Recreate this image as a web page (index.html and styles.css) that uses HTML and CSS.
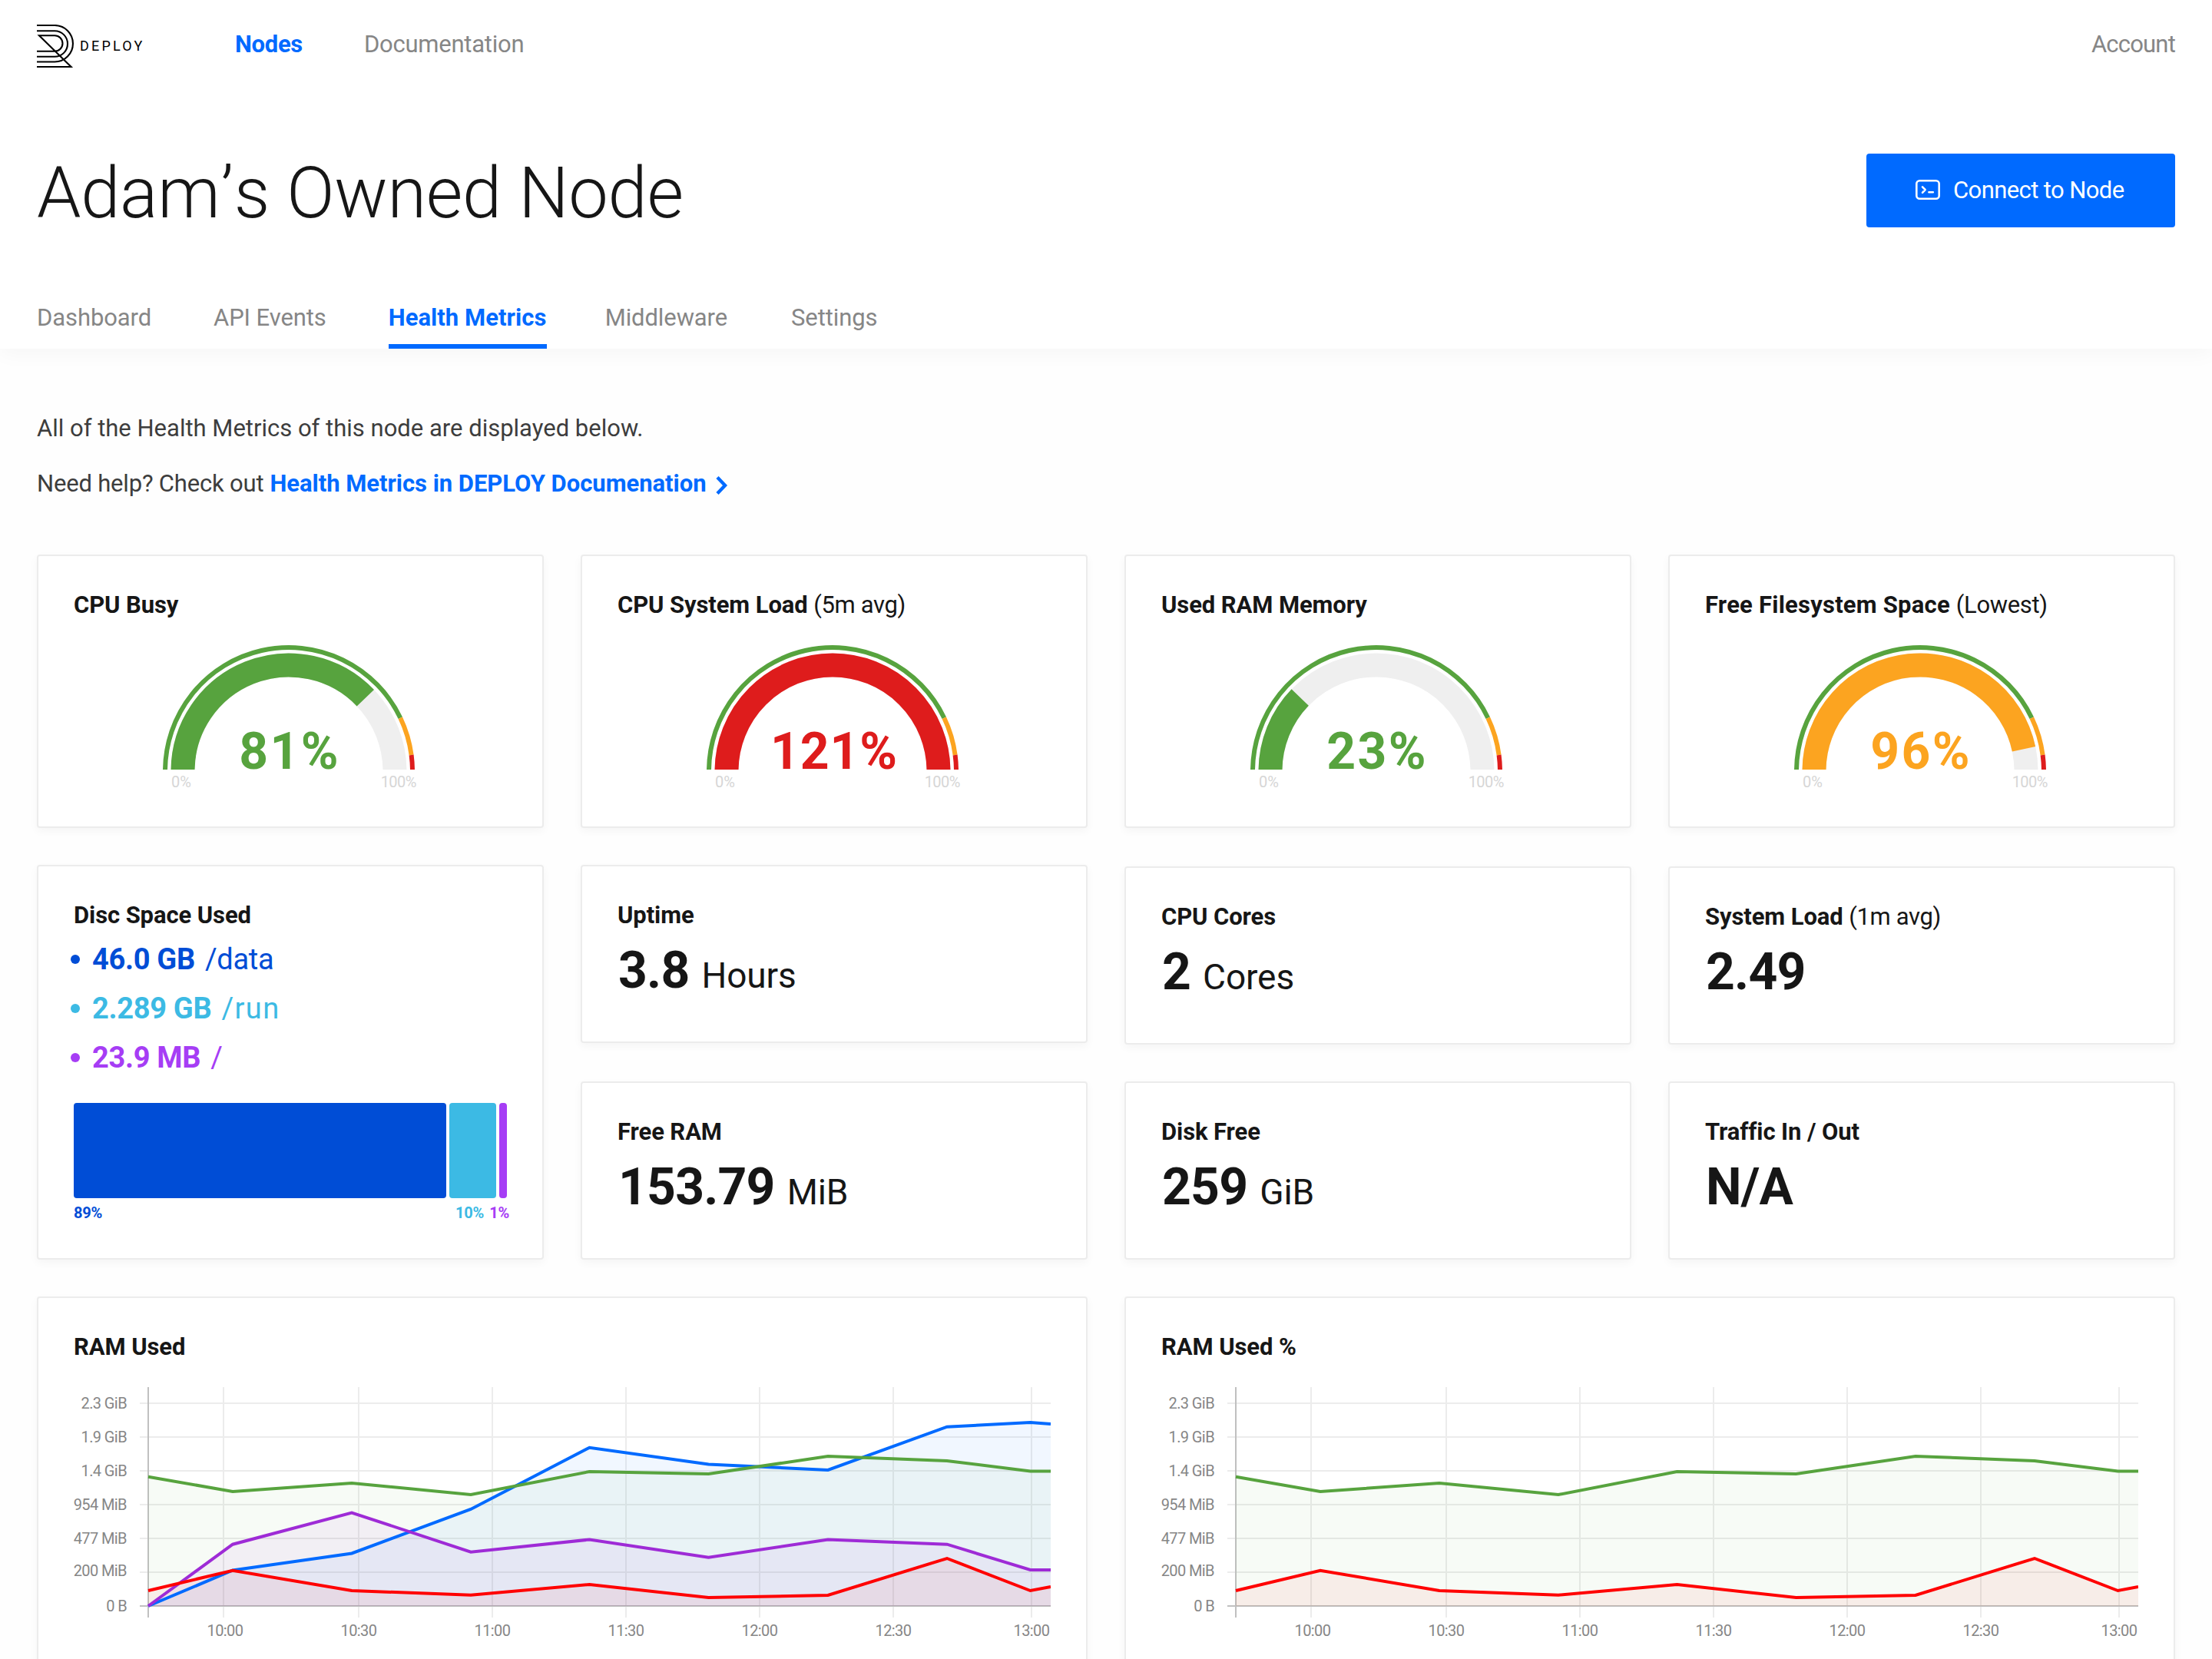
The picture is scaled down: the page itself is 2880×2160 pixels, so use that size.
FILE: index.html
```html
<!DOCTYPE html>
<html lang="en">
<head>
    <meta charset="UTF-8">
    <meta name="viewport" content="width=device-width, initial-scale=1.0">
    <title>Health Metrics</title>
    <link rel="stylesheet" href="styles.css">
</head>
<body>
    <header class="header">
        <nav class="topbar">
            <a class="logo">
                <svg width="48" height="56" viewBox="0 0 48 56" fill="none" stroke="#000" stroke-width="2.1">
                    <path d="M0 1H23.2A23.75 23.75 0 0 1 23.2 48.5H0"/>
                    <path d="M0 8.2H23.2A16.8 16.8 0 0 1 23.2 41.8H0"/>
                    <path d="M0 34.8H23.2A10.3 10.3 0 0 0 23.2 14.2H3L44.6 55H0"/>
                </svg>
                <span>DEPLOY</span>
            </a>
            <a class="nav-link active">Nodes</a>
            <a class="nav-link">Documentation</a>
            <a class="nav-link account">Account</a>
        </nav>

        <div class="hero">
            <h1>Adam<span>’</span>s Owned Node</h1>
            <button class="connect">
                <svg width="32" height="26" viewBox="0 0 32 26" fill="none" stroke="#fff" stroke-width="2.6" stroke-linecap="round" stroke-linejoin="round">
                    <rect x="1.3" y="1.3" width="29.4" height="23.4" rx="4"/>
                    <path d="M9 9.4L12.6 13L9 16.8M17.4 16.3H22.8"/>
                </svg>
                <span>Connect to Node</span>
            </button>
        </div>

        <div class="tabs">
            <a class="tab">Dashboard</a>
            <a class="tab">API Events</a>
            <a class="tab active">Health Metrics</a>
            <a class="tab">Middleware</a>
            <a class="tab">Settings</a>
        </div>
    </header>

    <main class="content">
        <div class="intro">
            <p>All of the Health Metrics of this node are displayed below.</p>
            <p class="help">Need help? Check out
                <a>Health Metrics in DEPLOY Documenation<svg width="18" height="28" viewBox="0 0 18 28" fill="none" stroke="#006aff" stroke-width="4.4"><path d="M3 3.4L13 14L3 24.6"/></svg></a>
            </p>
        </div>

        <!-- Gauges -->
        <section class="grid gauges">
            <div class="card">
                <h3>CPU Busy</h3>
                <div class="gauge green" data-angle="136.3"><strong>81%</strong></div>
            </div>
            <div class="card">
                <h3>CPU System Load <span>(5m avg)</span></h3>
                <div class="gauge red" data-angle="180"><strong>121%</strong></div>
            </div>
            <div class="card">
                <h3>Used RAM Memory</h3>
                <div class="gauge green" data-angle="44"><strong>23%</strong></div>
            </div>
            <div class="card">
                <h3 class="wide">Free Filesystem Space <span>(Lowest)</span></h3>
                <div class="gauge orange" data-angle="168"><strong>96%</strong></div>
            </div>
        </section>

        <!-- Disc space and single values -->
        <section class="grid stats">
            <div class="card disc">
                <h3>Disc Space Used</h3>
                <ul>
                    <li class="data"><b>46.0 GB</b><span>/data</span></li>
                    <li class="run"><b>2.289 GB</b><span>/run</span></li>
                    <li class="root"><b>23.9 MB</b><span>/</span></li>
                </ul>
                <div class="disc-bar">
                    <div class="data" style="width: 485px"></div>
                    <div class="run" style="width: 61px"></div>
                    <div class="root" style="width: 10px"></div>
                </div>
                <div class="disc-labels">
                    <b class="data">89%</b>
                    <b class="run">10%</b>
                    <b class="root">1%</b>
                </div>
            </div>
            <div class="column">
                <div class="card">
                    <h3>Uptime</h3>
                    <p class="value"><b>3.8</b><span>Hours</span></p>
                </div>
                <div class="card">
                    <h3>Free RAM</h3>
                    <p class="value"><b>153.79</b><span>MiB</span></p>
                </div>
            </div>
            <div class="column low">
                <div class="card">
                    <h3>CPU Cores</h3>
                    <p class="value"><b>2</b><span>Cores</span></p>
                </div>
                <div class="card">
                    <h3>Disk Free</h3>
                    <p class="value"><b>259</b><span>GiB</span></p>
                </div>
            </div>
            <div class="column low">
                <div class="card">
                    <h3>System Load <span>(1m avg)</span></h3>
                    <p class="value"><b>2.49</b></p>
                </div>
                <div class="card">
                    <h3>Traffic In / Out</h3>
                    <p class="value"><b>N/A</b></p>
                </div>
            </div>
        </section>

        <!-- Charts -->
        <section class="grid charts">
            <div class="card">
                <h3>RAM Used</h3>
                <svg class="chart" data-series="blue green purple red"></svg>
            </div>
            <div class="card">
                <h3>RAM Used %</h3>
                <svg class="chart" data-series="green red"></svg>
            </div>
        </section>
    </main>

    <script>
        // Point on a circle around the gauge centre, 0deg = left end
        function point(r, deg) {
            const a = deg * Math.PI / 180;
            return (164 - r * Math.cos(a)).toFixed(1) + ' ' + (164 - r * Math.sin(a)).toFixed(1);
        }

        function arc(r, from, to, cls) {
            return `<path class="${cls}" d="M${point(r, from)}A${r} ${r} 0 0 1 ${point(r, to)}"/>`;
        }

        document.querySelectorAll('.gauge').forEach((gauge) => {
            const svg = '<svg width="328" height="162" viewBox="0 0 328 162">' +
                arc(161, 0, 154.5, 'ring ring-green') +
                arc(161, 154.5, 172.5, 'ring ring-orange') +
                arc(161, 172.5, 180, 'ring ring-red') +
                arc(138, 0, 180, 'track') +
                arc(138, 0, Number(gauge.dataset.angle), 'fill') +
                '</svg><div class="scale"><span>0%</span><span class="max">100%</span></div>';
            gauge.insertAdjacentHTML('afterbegin', svg);
        });

        // Line charts
        const xs = [97, 207, 362, 517, 671.5, 826.5, 982, 1137, 1245.5, 1272];
        const series = {
            blue: [285, 238.5, 216.5, 159, 78.7, 100.5, 108, 51.7, 46, 48],
            green: [116.7, 136, 125, 140, 110, 113, 90, 96, 109.5, 109.5],
            purple: [285, 204.7, 163.5, 214.7, 198.5, 221.7, 198.5, 204.7, 238, 238],
            red: [265, 238.7, 265, 270.7, 257, 274, 271, 223, 265, 260]
        };
        const rows = [['2.3 GiB', 21, 28], ['1.9 GiB', 65, 72], ['1.4 GiB', 109, 116], ['954 MiB', 153, 160],
            ['477 MiB', 197, 204], ['200 MiB', 241, 246], ['0 B', 285, 292]];
        const times = [['10:00', 195], ['10:30', 371], ['11:00', 545], ['11:30', 719], ['12:00', 893], ['12:30', 1067], ['13:00', 1247]];

        document.querySelectorAll('.chart').forEach((chart) => {
            let out = '';
            times.forEach(([label, x], i) => {
                out += `<path class="line" d="M${x} 0V300"/><text class="time" x="${i ? x : x + 2}" y="324">${label}</text>`;
            });
            rows.forEach(([label, y, base]) => {
                out += `<path class="line${y === 285 ? ' axis' : ''}" d="M86 ${y}H1272"/><text class="size" x="69" y="${base}">${label}</text>`;
            });
            out += '<path class="line axis" d="M97 0V300"/>';

            const names = chart.dataset.series.split(' ');
            const lines = names.map((name) => xs.map((x, i) => x + ' ' + series[name][i]).join('L'));
            names.forEach((name, i) => {
                out += `<path class="area ${name}" d="M${lines[i]}V285H97Z"/>`;
            });
            names.forEach((name, i) => {
                out += `<path class="plot ${name}" d="M${lines[i]}"/>`;
            });
            chart.innerHTML = out;
        });
    </script>
</body>
</html>
```
FILE: styles.css
```css
/* General Reset */
* {
    box-sizing: border-box;
}

body {
    margin: 0;
    height: 2160px;
    overflow: hidden;
    font-family: Roboto, sans-serif;
    font-size: 31px;
    line-height: 36px;
    color: #161616;
    background: #fefefe;
}

h1,
h3,
p,
ul {
    margin: 0;
    padding: 0;
}

svg {
    display: block;
}

/* Header */
.header {
    height: 454px;
    padding: 0 48px;
    background: #fff;
    box-shadow: 0 8px 24px rgba(0, 0, 0, 0.03);
}

.topbar {
    display: flex;
    align-items: center;
    height: 116px;
}

.logo {
    display: flex;
    align-items: center;
    gap: 8px;
    width: 258px;
    margin-top: 4px;
    font-size: 18px;
    font-weight: 450;
    letter-spacing: 3.2px;
    color: #000;
}

.nav-link {
    margin-right: 80px;
    letter-spacing: -0.25px;
    color: #868686;
}

.nav-link.active {
    font-weight: 700;
    letter-spacing: -0.3px;
    color: #006aff;
}

.nav-link.account {
    margin: 0 0 0 auto;
    letter-spacing: -0.8px;
}

.hero {
    display: flex;
    align-items: center;
    justify-content: space-between;
    height: 264px;
}

.hero h1 {
    margin-top: 7px;
    font-size: 92px;
    font-weight: 300;
    line-height: 108px;
    letter-spacing: -0.25px;
}

.hero h1 span {
    margin: 0 1px;
}

.connect {
    display: flex;
    align-items: center;
    gap: 17px;
    width: 402px;
    height: 96px;
    padding: 0 0 0 64px;
    border: 0;
    border-radius: 4px;
    background: #006aff;
    color: #fff;
    font: inherit;
    letter-spacing: -0.6px;
}

.connect svg {
    margin-top: -2px;
}

.tabs {
    display: flex;
    gap: 81px;
}

.tab {
    padding: 16px 0;
    border-bottom: 6px solid transparent;
    letter-spacing: -0.1px;
    color: #868686;
}

.tab:last-child {
    margin-left: 2px;
}

.tab.active {
    width: 206px;
    margin-right: -5px;
    border-color: #006aff;
    font-weight: 700;
    letter-spacing: 0.05px;
    color: #006aff;
}

/* Content */
.content {
    padding: 68px 48px 0;
}

.intro {
    height: 200px;
    line-height: 72px;
    color: #3d3d3d;
}

.help {
    display: flex;
    gap: 8px;
    letter-spacing: -0.19px;
}

.help a {
    display: flex;
    align-items: center;
    gap: 11px;
    font-weight: 700;
    letter-spacing: -0.03px;
    color: #006aff;
}

.help svg {
    margin-top: 4px;
}

.grid {
    display: grid;
    grid-template-columns: repeat(4, minmax(0, 1fr));
    gap: 48px;
    margin-bottom: 48px;
}

/* Cards */
.card {
    padding: 46px 46px 0;
    border: 2px solid #ececec;
    border-radius: 4px;
    background: #fff;
    box-shadow: 0 4px 12px rgba(0, 0, 0, 0.04);
}

.card h3 {
    font-size: 31px;
    line-height: 36px;
    font-weight: 700;
    letter-spacing: -0.1px;
    white-space: nowrap;
}

.card h3 span {
    font-weight: 400;
    letter-spacing: -0.35px;
}

.card h3.wide {
    letter-spacing: 0.22px;
}

.gauges .card {
    height: 356px;
}

/* Gauge */
.gauge {
    position: relative;
    width: 328px;
    margin: 34px 0 0 116px;
}

.gauge path {
    fill: none;
}

.gauge .ring {
    stroke-width: 6px;
}

.ring-green {
    stroke: #57a33e;
}

.ring-orange {
    stroke: #fca420;
}

.ring-red {
    stroke: #de1c1c;
}

.gauge .track {
    stroke: #efefef;
    stroke-width: 31px;
}

.gauge .fill {
    stroke: currentColor;
    stroke-width: 31px;
}

.gauge.green {
    color: #57a33e;
}

.gauge.red {
    color: #de1c1c;
}

.gauge.orange {
    color: #fca420;
}

.gauge strong {
    position: absolute;
    top: 106px;
    left: 1px;
    width: 100%;
    font-size: 66px;
    line-height: 66px;
    letter-spacing: 2.4px;
    text-align: center;
}

.gauge.red strong {
    left: 2px;
    letter-spacing: 0.9px;
}

.scale {
    display: flex;
    justify-content: space-between;
    margin: 4px -2px 0 11px;
    font-size: 20px;
    line-height: 24px;
    color: #d6d6d6;
}

.scale .max {
    letter-spacing: -0.5px;
}

/* Stats */
.column {
    display: flex;
    flex-direction: column;
    justify-content: space-between;
    height: 514px;
}

.column.low {
    padding-top: 2px;
}

.column .card {
    height: 232px;
}

.value {
    display: flex;
    align-items: baseline;
    gap: 16px;
    margin-top: 15px;
    padding-left: 1px;
    line-height: 78px;
}

.value b {
    font-size: 66px;
    letter-spacing: -0.8px;
}

.value span {
    font-size: 46px;
    font-weight: 370;
    letter-spacing: -0.1px;
}

/* Disc space */
.disc {
    height: 514px;
}

.disc ul {
    margin: 7px 0 27px -4px;
    list-style: none;
}

.disc li {
    display: flex;
    align-items: center;
    gap: 13px;
    font-size: 38px;
    line-height: 64px;
    letter-spacing: -0.3px;
}

.disc li::before {
    content: "";
    width: 12px;
    height: 12px;
    margin-right: 3px;
    border-radius: 50%;
    background: currentColor;
}

.disc .run span {
    letter-spacing: 1.4px;
}

.data {
    color: #004dd6;
}

.run {
    color: #3cbae4;
}

.root {
    color: #a63df5;
}

.disc-bar {
    display: flex;
    gap: 4px;
    height: 124px;
}

.disc-bar div {
    border-radius: 4px;
    background: currentColor;
}

.disc-labels {
    display: flex;
    gap: 7px;
    width: 567px;
    margin-top: 7px;
    font-size: 20px;
    line-height: 24px;
    letter-spacing: -0.2px;
}

.disc-labels .data {
    margin-right: auto;
}

/* Charts */
.charts {
    grid-template-columns: repeat(2, minmax(0, 1fr));
}

.charts .card {
    height: 520px;
}

.chart {
    width: 1272px;
    height: 340px;
    margin-top: 34px;
}

.chart path {
    fill: none;
}

.chart .line {
    stroke: #ececec;
    stroke-width: 2px;
}

.chart .axis {
    stroke: #c0c0c0;
}

.chart text {
    font-size: 20px;
    letter-spacing: -0.6px;
    fill: #868686;
}

.chart .time {
    text-anchor: middle;
}

.chart .size {
    text-anchor: end;
}

.blue {
    --color: #006aff;
}

.chart .green {
    --color: #57a33e;
}

.purple {
    --color: #9e2bd6;
}

.chart .red {
    --color: #ff0000;
}

.chart .area {
    fill: var(--color);
    fill-opacity: 0.055;
}

.chart .area.green {
    fill-opacity: 0.047;
}

.chart .plot {
    stroke: var(--color);
    stroke-width: 4px;
}
```
